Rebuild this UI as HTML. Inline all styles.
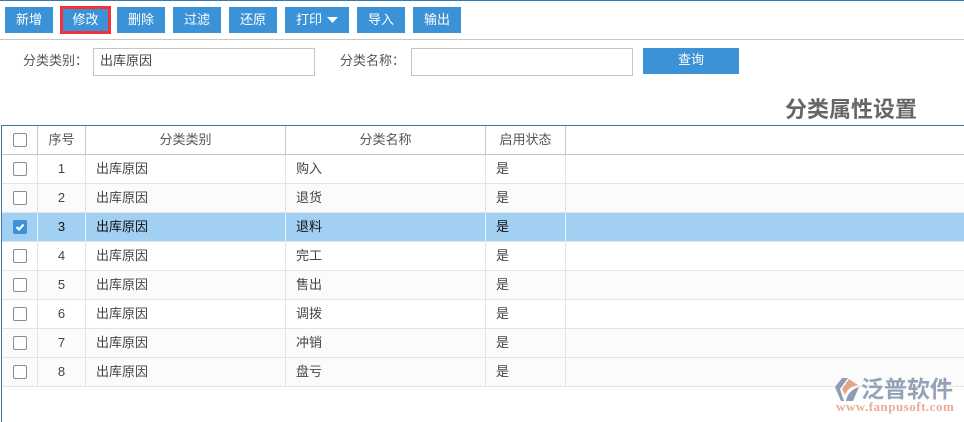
<!DOCTYPE html>
<html><head><meta charset="utf-8">
<style>
html,body{margin:0;padding:0;background:#fff}
#p{position:relative;width:964px;height:422px;overflow:hidden;background:#fff;font:13px/20px "Liberation Sans","Noto Sans CJK SC",sans-serif;color:#444}
#p div,#p span.a{position:absolute;box-sizing:border-box}
.b{top:7px;height:26px;background:#3b92d6;color:#fff;text-align:center;line-height:25px;width:48px}
.l{top:51px;line-height:20px;color:#555}
.i{top:48px;height:28px;border:1px solid #c4c4c4;background:#fff}
.r{left:2px;width:962px;height:29px;border-bottom:1px solid #e4e4e4;line-height:28px}
.r.e{background:#fbfbfb}
.r.s{background:#a2d0f2;color:#111}
.h{border-bottom:1px solid #c4c4c4;height:29px;top:126px;color:#555}
.c{top:0;height:100%;border-right:1px solid #e4e4e4}
.h .c{border-right-color:#c4c4c4}
.s .c{border-right-color:#e8f2fa}
.c0{left:0;width:36px}
.c1{left:36px;width:48px;text-align:center}
.c2{left:84px;width:200px;padding-left:10px}
.c3{left:284px;width:200px;padding-left:10px}
.c4{left:484px;width:80px;padding-left:10px}
.h .c2,.h .c3,.h .c4{text-align:center;padding-left:0}
.k{left:11px;top:7px;width:14px;height:14px;border:1px solid #8c8c8c;border-radius:2px;background:#fff}
</style></head><body><div id="p">
<div style="left:0;top:0;width:964px;height:1px;background:#2f7ab8"></div>
<div class="b" style="left:5px">新增</div>
<div class="b" style="left:60px;top:6px;width:51px;height:28px;border:3px solid #f2313a;line-height:22px">修改</div>
<div class="b" style="left:117px">删除</div>
<div class="b" style="left:173px">过滤</div>
<div class="b" style="left:229px">还原</div>
<div class="b" style="left:285px;width:64px;text-align:left;padding-left:11px">打印<svg width="11" height="6" style="position:absolute;left:42px;top:10px"><path d="M0 0H11L5.500 6Z" fill="#fff"/></svg></div>
<div class="b" style="left:357px">导入</div>
<div class="b" style="left:413px">输出</div>
<div style="left:0;top:39px;width:964px;height:1px;background:#c8c8c8"></div>
<div class="l" style="left:23px">分类类别：</div>
<div class="i" style="left:93px;width:222px;padding-left:6px;line-height:24px;color:#444">出库原因</div>
<div class="l" style="left:340px">分类名称：</div>
<div class="i" style="left:411px;width:222px"></div>
<div class="b" style="left:643px;top:48px;width:96px;line-height:24px">查询</div>
<div style="left:785px;top:97px;width:140px;font-size:22px;line-height:26px;font-weight:bold;color:#666;white-space:nowrap">分类属性设置</div>
<div style="left:1px;top:125px;width:963px;height:1px;background:#3a7aa8"></div>
<div style="left:1px;top:125px;width:1px;height:297px;background:#3a7aa8"></div>

<div class="r h"><div class="c c0"><span class="a k"></span></div><div class="c c1">序号</div><div class="c c2">分类类别</div><div class="c c3">分类名称</div><div class="c c4">启用状态</div></div>

<div class="r" style="top:155px"><div class="c c0"><span class="a k"></span></div><div class="c c1">1</div><div class="c c2">出库原因</div><div class="c c3">购入</div><div class="c c4">是</div></div>
<div class="r e" style="top:184px"><div class="c c0"><span class="a k"></span></div><div class="c c1">2</div><div class="c c2">出库原因</div><div class="c c3">退货</div><div class="c c4">是</div></div>
<div class="r s" style="top:213px"><div class="c c0"><span class="a k" style="background:#3b92d6;border-color:#3b92d6"><svg width="12" height="12" style="position:absolute;left:0;top:0"><path d="M2.500 6L5 8.500L9.500 3.500" fill="none" stroke="#fff" stroke-width="2.200"/></svg></span></div><div class="c c1">3</div><div class="c c2">出库原因</div><div class="c c3">退料</div><div class="c c4">是</div></div>
<div class="r" style="top:242px"><div class="c c0"><span class="a k"></span></div><div class="c c1">4</div><div class="c c2">出库原因</div><div class="c c3">完工</div><div class="c c4">是</div></div>
<div class="r e" style="top:271px"><div class="c c0"><span class="a k"></span></div><div class="c c1">5</div><div class="c c2">出库原因</div><div class="c c3">售出</div><div class="c c4">是</div></div>
<div class="r" style="top:300px"><div class="c c0"><span class="a k"></span></div><div class="c c1">6</div><div class="c c2">出库原因</div><div class="c c3">调拨</div><div class="c c4">是</div></div>
<div class="r e" style="top:329px"><div class="c c0"><span class="a k"></span></div><div class="c c1">7</div><div class="c c2">出库原因</div><div class="c c3">冲销</div><div class="c c4">是</div></div>
<div class="r e" style="top:358px"><div class="c c0"><span class="a k"></span></div><div class="c c1">8</div><div class="c c2">出库原因</div><div class="c c3">盘亏</div><div class="c c4">是</div></div>

<svg width="30" height="28" style="position:absolute;left:834px;top:377px"><path d="M1 10L8 1H14L6 12L10 24H7Z" fill="#8e9db5"/><path d="M15 2L24 8C17 9 13 13 11 18L8 12Z" fill="#e3a582"/><path d="M25 10L19 24H12C13 17 18 12 25 10Z" fill="#8e9db5"/></svg>
<div style="left:861px;top:375px;width:100px;font-size:23px;line-height:28px;font-weight:bold;color:#94a2b9;white-space:nowrap">泛普软件</div>
<div style="left:836px;top:400px;width:125px;font:13px/14px 'Liberation Serif',serif;font-weight:bold;letter-spacing:.5px;color:#e8ad94;white-space:nowrap">www.fanpusoft.com</div>
</div></body></html>
